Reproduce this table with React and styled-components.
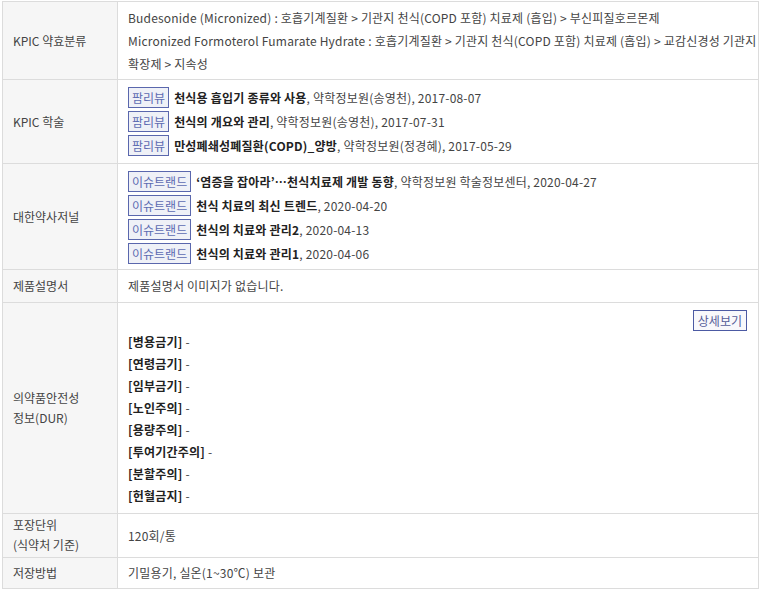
import React from "react";
import styled, { createGlobalStyle } from "styled-components";

const GlobalStyle = createGlobalStyle`
  body {
    margin: 0;
    background: #fff;
    font-family: "Noto Sans CJK KR", "Noto Sans", sans-serif;
  }
`;

const Wrap = styled.div`
  padding: 1px 0 0 2px;
`;

const Table = styled.table`
  width: 757px;
  border-collapse: collapse;
  table-layout: fixed;
  font-size: 12px;
  color: #444;
  border: 1px solid #d4d4d4;
`;

const Label = styled.th`
  width: 94px;
  background: #f6f6f6;
  border: 1px solid #dcdcdc;
  text-align: left;
  font-weight: normal;
  color: #444;
  padding: ${(p) => p.$pad || "0 10px"};
  line-height: 20px;
  vertical-align: middle;
`;

const Cell = styled.td`
  border: 1px solid #dcdcdc;
  padding: ${(p) => p.$pad || "5px 10px"};
  line-height: ${(p) => p.$lh || "23px"};
  vertical-align: middle;
  letter-spacing: 0.2px;
  overflow: hidden;
`;

const TextLine = styled.div`
  height: 23px;
  line-height: 23px;
  white-space: nowrap;
`;

const Line = styled.div`
  height: 24px;
  display: flex;
  align-items: center;
  white-space: nowrap;
`;

const Badge = styled.span`
  display: inline-block;
  height: 19px;
  line-height: 19px;
  padding: 0 3px;
  margin-right: 5px;
  border: 1px solid #5a67ad;
  background: #eff1f7;
  color: #5d6bb2;
  letter-spacing: 0;
`;

const Title = styled.b`
  color: #222;
  font-weight: bold;
  letter-spacing: 0.2px;
`;

const TopRow = styled.div`
  display: flex;
  justify-content: flex-end;
  padding-right: 1px;
`;

const MoreButton = styled.button`
  height: 21px;
  padding: 0 4px;
  border: 1px solid #4c5aa3;
  background: #f8f8fb;
  color: #555d99;
  font-family: inherit;
  font-size: 12px;
  line-height: 19px;
  cursor: pointer;
`;

const DurLine = styled.div`
  height: 22px;
  line-height: 22px;
  color: #222;
  font-weight: bold;
  span {
    font-weight: normal;
    color: #444;
  }
`;

const kpicItems = [
  ["천식용 흡입기 종류와 사용", "약학정보원(송영천), 2017-08-07"],
  ["천식의 개요와 관리", "약학정보원(송영천), 2017-07-31"],
  ["만성폐쇄성폐질환(COPD)_양방", "약학정보원(정경혜), 2017-05-29"],
];

const journalItems = [
  ["‘염증을 잡아라’…천식치료제 개발 동향", "약학정보원 학술정보센터, 2020-04-27"],
  ["천식 치료의 최신 트렌드", "2020-04-20"],
  ["천식의 치료와 관리2", "2020-04-13"],
  ["천식의 치료와 관리1", "2020-04-06"],
];

const durItems = [
  "병용금기",
  "연령금기",
  "임부금기",
  "노인주의",
  "용량주의",
  "투여기간주의",
  "분할주의",
  "헌혈금지",
];

export default function App() {
  return (
    <Wrap>
      <GlobalStyle />
      <Table>
        <tbody>
          <tr>
            <Label>KPIC 약효분류</Label>
            <Cell $pad="4px 10px 4px 10px">
              <TextLine>
                Budesonide (Micronized) : 호흡기계질환 &gt; 기관지 천식(COPD 포함) 치료제 (흡입) &gt; 부신피질호르몬제
              </TextLine>
              <TextLine>
                Micronized Formoterol Fumarate Hydrate : 호흡기계질환 &gt; 기관지 천식(COPD 포함) 치료제 (흡입) &gt; 교감신경성 기관지
              </TextLine>
              <TextLine>확장제 &gt; 지속성</TextLine>
            </Cell>
          </tr>
          <tr>
            <Label>KPIC 학술</Label>
            <Cell $pad="5px 10px 6px 10px">
              {kpicItems.map(([t, rest]) => (
                <Line key={t}>
                  <Badge>팜리뷰</Badge>
                  <Title>{t}</Title>, {rest}
                </Line>
              ))}
            </Cell>
          </tr>
          <tr>
            <Label>대한약사저널</Label>
            <Cell $pad="5px 10px 4px 10px">
              {journalItems.map(([t, rest]) => (
                <Line key={t}>
                  <Badge>이슈트랜드</Badge>
                  <Title>{t}</Title>, {rest}
                </Line>
              ))}
            </Cell>
          </tr>
          <tr>
            <Label>제품설명서</Label>
            <Cell $pad="5px 10px 5px 10px" $lh="22px">
              제품설명서 이미지가 없습니다.
            </Cell>
          </tr>
          <tr>
            <Label>
              의약품안전성
              <br />
              정보(DUR)
            </Label>
            <Cell $pad="7px 10px 6px 10px">
              <TopRow>
                <MoreButton>상세보기</MoreButton>
              </TopRow>
              {durItems.map((d) => (
                <DurLine key={d}>
                  [{d}] <span>-</span>
                </DurLine>
              ))}
            </Cell>
          </tr>
          <tr>
            <Label $pad="1px 10px 2px 10px">
              포장단위
              <br />
              (식약처 기준)
            </Label>
            <Cell $pad="4px 10px" $lh="22px">
              120회/통
            </Cell>
          </tr>
          <tr>
            <Label>저장방법</Label>
            <Cell $pad="4px 10px" $lh="22px">
              기밀용기, 실온(1~30℃) 보관
            </Cell>
          </tr>
        </tbody>
      </Table>
    </Wrap>
  );
}
